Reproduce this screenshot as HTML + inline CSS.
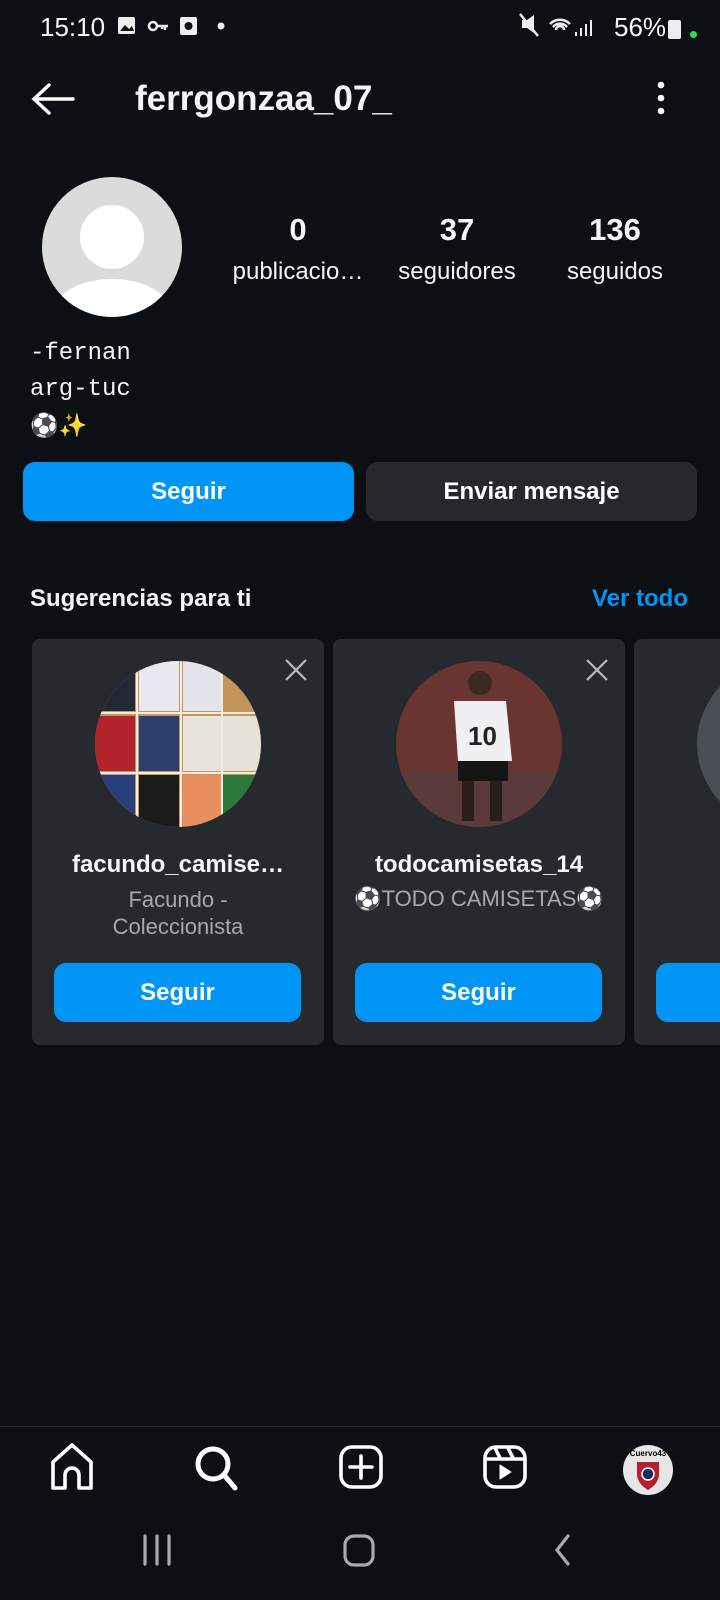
<!DOCTYPE html>
<html><head><meta charset="utf-8"><style>
*{margin:0;padding:0;box-sizing:border-box}
body{width:720px;height:1600px;background:#0c1014;color:#f5f5f5;font-family:"Liberation Sans",sans-serif;position:relative;overflow:hidden}
.a{position:absolute}
.btn{position:absolute;border-radius:12px;display:flex;align-items:center;justify-content:center;font-weight:bold;font-size:24px;color:#fff}
.card{position:absolute;top:639px;width:292px;height:406px;background:#26292e;border-radius:8px}
.c{text-align:center;width:100%}
</style></head><body>
<div class="a" style="left:40px;top:12px;font-size:26px">15:10</div>
<svg class="a" style="left:116px;top:15px" width="110" height="24"><rect x="2" y="2" width="17" height="17" rx="2" fill="#eee"/><path d="M4 16l5-6 4 4 3-3 2 5z" fill="#0c1014"/><circle cx="37" cy="11" r="4" fill="none" stroke="#eee" stroke-width="2.5"/><path d="M41 11h11M49 11v4M46 11v3" stroke="#eee" stroke-width="2.5"/><rect x="64" y="2" width="17" height="18" rx="2" fill="#eee"/><circle cx="72.5" cy="11" r="4" fill="#0c1014"/><circle cx="105" cy="11" r="3.5" fill="#eee"/></svg>
<svg class="a" style="left:518px;top:12px" width="80" height="28"><path d="M4 8h5l7-5v18l-7-5H4z" fill="#eee"/><path d="M2 2l18 22" stroke="#eee" stroke-width="2.5"/><path d="M32 12a14 14 0 0 1 20 0M35 15a9 9 0 0 1 14 0M38 18a4 4 0 0 1 8 0" stroke="#eee" stroke-width="2.5" fill="none"/><path d="M58 24v-4M63 24v-8M68 24v-12M73 24v-16" stroke="#eee" stroke-width="2"/></svg>
<div class="a" style="left:614px;top:12px;font-size:26px">56%</div>
<div class="a" style="left:668px;top:20px;width:13px;height:19px;background:#eee;border-radius:2px"></div>
<div class="a" style="left:690px;top:31px;width:7px;height:7px;background:#2ee04a;border-radius:50%"></div>

<svg class="a" style="left:30px;top:82px" width="46" height="34"><path d="M43 17H4M19 3L4 17l15 14" stroke="#fff" stroke-width="3.4" fill="none" stroke-linecap="round"/></svg>
<div class="a" style="left:135px;top:79px;font-size:35px;font-weight:bold">ferrgonzaa_07_</div>
<svg class="a" style="left:652px;top:80px" width="20" height="36"><circle cx="9" cy="5" r="3.3" fill="#fff"/><circle cx="9" cy="18" r="3.3" fill="#fff"/><circle cx="9" cy="31" r="3.3" fill="#fff"/></svg>

<svg class="a" style="left:42px;top:177px" width="140" height="140"><defs><clipPath id="cp"><circle cx="70" cy="70" r="70"/></clipPath></defs><circle cx="70" cy="70" r="70" fill="#dbdbdb"/><g clip-path="url(#cp)" fill="#fff"><circle cx="70" cy="60" r="32"/><ellipse cx="70" cy="138" rx="60" ry="36"/></g></svg>
<div class="a" style="left:218px;top:212px;width:160px;text-align:center;font-size:31px;font-weight:bold">0</div>
<div class="a" style="left:218px;top:258px;width:160px;text-align:center;font-size:24px">publicacio…</div>
<div class="a" style="left:377px;top:212px;width:160px;text-align:center;font-size:31px;font-weight:bold">37</div>
<div class="a" style="left:377px;top:258px;width:160px;text-align:center;font-size:24px">seguidores</div>
<div class="a" style="left:535px;top:212px;width:160px;text-align:center;font-size:31px;font-weight:bold">136</div>
<div class="a" style="left:535px;top:258px;width:160px;text-align:center;font-size:24px">seguidos</div>

<div class="a" style="left:30px;top:336px;font-family:'Liberation Mono',monospace;font-size:24px;line-height:36px">-fernan<br>arg-tuc<br><span style="font-family:'DejaVu Sans',sans-serif;font-size:23px">⚽✨</span></div>

<div class="btn" style="left:23px;top:462px;width:331px;height:59px;background:#0095f6">Seguir</div>
<div class="btn" style="left:366px;top:462px;width:331px;height:59px;background:#25292e">Enviar mensaje</div>

<div class="a" style="left:30px;top:585px;font-size:24px;font-weight:bold">Sugerencias para ti</div>
<div class="a" style="right:32px;top:585px;font-size:24px;font-weight:bold;color:#0095f6">Ver todo</div>

<div class="card" style="left:32px">
 <svg class="a" style="left:252px;top:19px" width="24" height="24"><path d="M2 2l20 20M22 2L2 22" stroke="#bbb" stroke-width="2.2"/></svg>
 <svg class="a" style="left:63px;top:22px" width="166" height="166"><defs><clipPath id="c1"><circle cx="83" cy="83" r="83"/></clipPath></defs><g clip-path="url(#c1)"><rect width="166" height="166" fill="#c4955a"/><rect x="0" y="55" width="40" height="55" fill="#b3232e"/><rect x="44" y="55" width="40" height="55" fill="#2c3e6e"/><rect x="88" y="55" width="38" height="55" fill="#e8e4dc"/><rect x="128" y="55" width="38" height="55" fill="#e6e2d8"/><rect x="44" y="0" width="40" height="50" fill="#e8e8f0"/><rect x="88" y="0" width="38" height="50" fill="#e4e4ec"/><rect x="0" y="0" width="40" height="50" fill="#222836"/><rect x="44" y="114" width="40" height="52" fill="#1b1b1b"/><rect x="88" y="114" width="38" height="52" fill="#e98f5d"/><rect x="128" y="114" width="38" height="52" fill="#2c7a3a"/><rect x="0" y="114" width="40" height="52" fill="#2a3f7a"/><path d="M42 0v166M86 0v166M127 0v166M0 52h166M0 112h166" stroke="#f2eee6" stroke-width="2"/></g></svg>
 <div class="a c" style="top:212px;font-size:24px;font-weight:bold">facundo_camise…</div>
 <div class="a c" style="top:247px;font-size:22px;color:#a8a8a8;line-height:27px">Facundo -<br>Coleccionista</div>
 <div class="btn" style="left:22px;top:324px;width:247px;height:59px;background:#0095f6">Seguir</div>
</div>
<div class="card" style="left:333px">
 <svg class="a" style="left:252px;top:19px" width="24" height="24"><path d="M2 2l20 20M22 2L2 22" stroke="#bbb" stroke-width="2.2"/></svg>
 <svg class="a" style="left:63px;top:22px" width="166" height="166"><defs><clipPath id="c2"><circle cx="83" cy="83" r="83"/></clipPath></defs><g clip-path="url(#c2)"><rect width="166" height="166" fill="#6a3430"/><rect y="110" width="166" height="56" fill="#5a3a3a"/><circle cx="84" cy="22" r="12" fill="#3a2a22"/><path d="M58 40h52l6 60H62z" fill="#f0f0f2"/><path d="M62 100h50v20H62z" fill="#151515"/><path d="M66 120h12v40H66zM94 120h12v40H94z" fill="#2a1e1a"/><text x="72" y="84" font-family="Liberation Sans" font-weight="bold" font-size="26" fill="#222">10</text></g></svg>
 <div class="a c" style="top:212px;font-size:24px;font-weight:bold">todocamisetas_14</div>
 <div class="a c" style="top:247px;font-size:22px;color:#a8a8a8;font-family:'Liberation Sans','DejaVu Sans',sans-serif">⚽TODO CAMISETAS⚽</div>
 <div class="btn" style="left:22px;top:324px;width:247px;height:59px;background:#0095f6">Seguir</div>
</div>
<div class="card" style="left:634px;width:120px">
 <div class="a" style="left:63px;top:22px;width:166px;height:166px;border-radius:50%;background:#4a4f56"></div>
 <div class="btn" style="left:22px;top:324px;width:247px;height:59px;background:#0095f6"></div>
</div>

<div class="a" style="left:0;top:1426px;width:720px;height:1px;background:#262a2e"></div>
<svg class="a" style="left:0;top:1440px" width="720" height="60" fill="none" stroke="#fff" stroke-width="3.6" stroke-linejoin="round" stroke-linecap="round">
 <path d="M53 48V22l19-17 19 17v26H79V35a7 7 0 0 0-14 0v13z"/>
 <circle cx="213" cy="24" r="15" stroke-width="5"/><path d="M224 35l11 13" stroke-width="5"/>
 <rect x="341" y="7" width="40" height="40" rx="11"/><path d="M361 16v22M350 27h22"/>
 <rect x="485" y="7" width="40" height="40" rx="11"/><path d="M486 19h38M495 8l5 10M508 8l5 10"/><path d="M500 25v14l11-7z" fill="#fff" stroke-width="1"/>
</svg>
<div class="a" style="left:623px;top:1445px;width:50px;height:50px;border-radius:50%;background:#e6e6e6;overflow:hidden">
 <div class="a" style="left:0;top:4px;width:50px;text-align:center;font-size:8px;color:#000;font-weight:bold">Cuervo43</div>
 <svg class="a" style="left:12px;top:14px" width="26" height="32"><path d="M2 3h22v12c0 8-6 13-11 16C8 28 2 23 2 15z" fill="#b5202e"/><circle cx="13" cy="15" r="6" fill="#1a2a5a" stroke="#fff" stroke-width="1.5"/></svg>
</div>
<svg class="a" style="left:0;top:1530px" width="720" height="50" fill="none" stroke="#aaa" stroke-width="3.2" stroke-linecap="round">
 <path d="M145 6v28M157 6v28M169 6v28"/>
 <rect x="345" y="6" width="28" height="29" rx="9"/>
 <path d="M568 6l-11 14 11 14"/>
</svg>
</body></html>
